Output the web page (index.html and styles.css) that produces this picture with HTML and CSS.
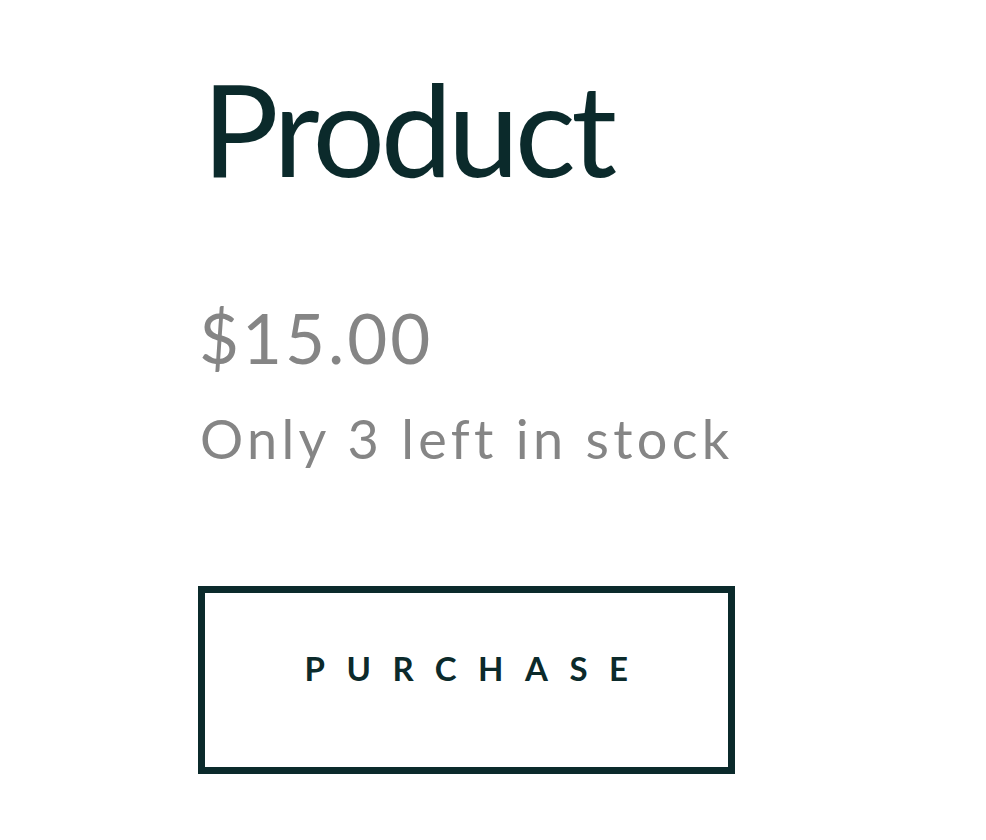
FILE: index.html
```html
<!DOCTYPE html>
<html lang="en">
<head>
<meta charset="utf-8">
<title>Product</title>
<link rel="stylesheet" href="styles.css">
</head>
<body>
<main class="product">
  <h1 class="product-title">Product</h1>
  <p class="product-price">$15.00</p>
  <p class="product-stock">Only 3 left in stock</p>
  <button class="purchase-btn" type="button">PURCHASE</button>
</main>
</body>
</html>
```

FILE: styles.css
```css
html, body {
  margin: 0;
  padding: 0;
  background: #ffffff;
}

body {
  font-family: Lato, "Noto Sans", "Liberation Sans", sans-serif;
}

.product {
  display: flex;
  flex-direction: column;
  align-items: flex-start;
  padding: 64px 0 0 198px;
}

.product-title {
  margin: 0 0 0 4px;
  font-size: 128px;
  font-weight: 400;
  line-height: 1;
  letter-spacing: -4.5px;
  color: #0b2a2b;
}

.product-price {
  margin: 111px 0 0 1px;
  font-size: 69px;
  font-weight: 400;
  line-height: 1;
  letter-spacing: 3px;
  color: #858585;
}

.product-stock {
  margin: 40px 0 0 2px;
  font-size: 54px;
  font-weight: 400;
  line-height: 1;
  letter-spacing: 4.3px;
  color: #858585;
}

.purchase-btn {
  margin-top: 120px;
  box-sizing: border-box;
  width: 537px;
  height: 188px;
  padding: 0 0 23px 21px;
  border: 7px solid #0b2a2b;
  background: #ffffff;
  font-family: Lato, "Noto Sans", "Liberation Sans", sans-serif;
  font-size: 33px;
  font-weight: 700;
  letter-spacing: 21.5px;
  color: #0b2a2b;
  line-height: 1;
  cursor: pointer;
}
```
